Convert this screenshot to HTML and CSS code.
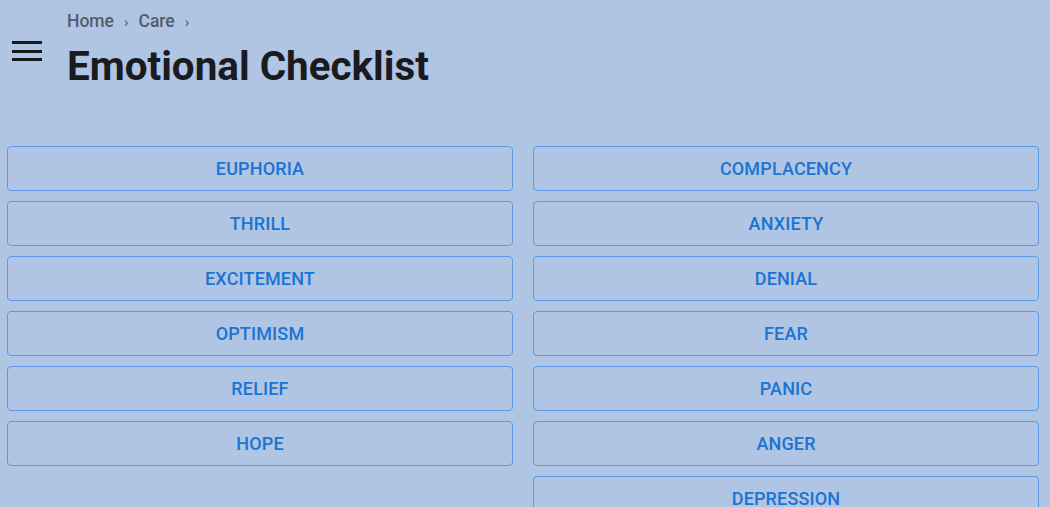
FILE: index.html
```html
<!DOCTYPE html>
<html lang="en">
<head>
    <meta charset="UTF-8">
    <meta name="viewport" content="width=device-width, initial-scale=1.0">
    <title>Emotional Checklist</title>
    <link rel="stylesheet" href="styles.css">
</head>
<body>
    <div class="header">
        <button class="menu" aria-label="menu">
            <span></span><span></span><span></span>
        </button>
        <div class="titles">
            <nav class="crumbs">
                <span>Home</span><span class="sep">›</span><span>Care</span><span class="sep">›</span>
            </nav>
            <h1>Emotional Checklist</h1>
        </div>
    </div>

    <div class="columns">
        <div class="col">
            <button class="emotion">Euphoria</button>
            <button class="emotion">Thrill</button>
            <button class="emotion">Excitement</button>
            <button class="emotion">Optimism</button>
            <button class="emotion">Relief</button>
            <button class="emotion">Hope</button>
        </div>
        <div class="col">
            <button class="emotion">Complacency</button>
            <button class="emotion">Anxiety</button>
            <button class="emotion">Denial</button>
            <button class="emotion">Fear</button>
            <button class="emotion">Panic</button>
            <button class="emotion">Anger</button>
            <button class="emotion">Depression</button>
        </div>
    </div>
</body>
</html>
```

FILE: styles.css
```css
body {
    margin: 0;
    padding: 0 11px 0 7px;
    background-color: #b0c4e4;
    font-family: Roboto, 'Noto Sans', sans-serif;
    overflow: hidden;
}

.header {
    display: flex;
    align-items: flex-start;
}

.menu {
    width: 30px;
    height: 20px;
    margin: 41px 0 0 5px;
    padding: 0;
    border: none;
    background: none;
    display: flex;
    flex-direction: column;
    justify-content: space-between;
}
.menu span {
    display: block;
    width: 30px;
    height: 3px;
    background: #16181d;
}

.titles {
    margin-left: 25px;
    padding-top: 10px;
}

.crumbs {
    font-size: 17.5px;
    font-weight: 500;
    color: #545b69;
    line-height: 22px;
}
.crumbs .sep {
    margin: 0 10px;
    font-weight: 400;
    font-size: 15px;
}

h1 {
    margin: 8px 0 0;
    font-size: 40.4px;
    font-weight: 700;
    line-height: 52px;
    color: #1a1b20;
}

.columns {
    display: grid;
    grid-template-columns: 1fr 1fr;
    column-gap: 20px;
    margin-top: 53px;
}

.col {
    display: flex;
    flex-direction: column;
    gap: 10px;
}

.emotion {
    height: 45px;
    border: 1px solid #5c9be2;
    border-radius: 4px;
    background: transparent;
    color: #1a74d2;
    font-family: Roboto, sans-serif;
    font-size: 18px;
    font-weight: 500;
    text-transform: uppercase;
    letter-spacing: 0.15px;
    cursor: pointer;
}
.emotion:hover {
    background: rgba(25, 118, 210, 0.06);
}
```
